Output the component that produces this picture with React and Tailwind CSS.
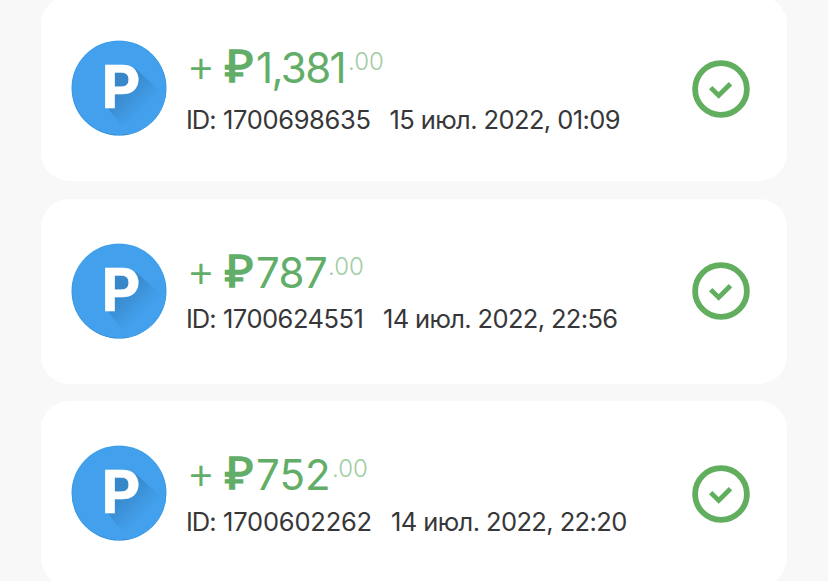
import React from 'react';

const payments = [
  {
    id: '1700698635',
    whole: '1,381',
    date: '15 июл. 2022, 01:09',
    amountClass: 'w-[92px] tracking-[-1.6px]',
    rowClass: 'pt-[48px]',
    metaClass: 'mt-[12px]',
    idClass: 'w-[166.5px] tracking-[-0.35px]',
    dateClass: 'tracking-[-0.6px]',
  },
  {
    id: '1700624551',
    whole: '787',
    date: '14 июл. 2022, 22:56',
    amountClass: 'w-[72px] tracking-[-0.6px]',
    rowClass: 'pt-[50px]',
    metaClass: 'mt-[6.5px]',
    idClass: 'w-[160px] tracking-[-0.5px]',
    dateClass: 'tracking-[-0.65px]',
  },
  {
    id: '1700602262',
    whole: '752',
    date: '14 июл. 2022, 22:20',
    amountClass: 'w-[76px] tracking-[0.1px]',
    rowClass: 'pt-[50px]',
    metaClass: 'mt-[6.5px]',
    idClass: 'w-[168px] tracking-[-0.2px]',
    dateClass: 'tracking-[-0.6px]',
  },
];

function PayeerLogo() {
  return (
    <svg viewBox="0 0 96 96" className="-mt-px w-24 h-24 shrink-0">
      <defs>
        <clipPath id="disc">
          <circle cx="48" cy="48" r="47.5" />
        </clipPath>
        <linearGradient id="shade" x1="50" y1="46" x2="73" y2="69" gradientUnits="userSpaceOnUse">
          <stop offset="0" stopColor="#3787c9" />
          <stop offset="1" stopColor="#43a0ec" />
        </linearGradient>
      </defs>
      <circle cx="48" cy="48" r="47.5" fill="#55b4f3" />
      <g clipPath="url(#disc)">
        <circle cx="48" cy="48.4" r="47.3" fill="#3788cb" />
        <circle cx="48" cy="48" r="46.9" fill="#43a0ec" />
        <path d="M65 29 L98 59 L98 98 L60 98 L36 67 L44 56 L44 32 L60 32 Z" fill="url(#shade)" />
      </g>
      <text
        transform="translate(30.6 67.8) scale(1.02 1)"
        fill="#fff"
        stroke="#fff"
        strokeWidth="0.6"
        fontFamily="Inter, sans-serif"
        fontWeight="700"
        fontSize="59"
      >
        P
      </text>
    </svg>
  );
}

function StatusIcon() {
  return (
    <svg viewBox="0 0 58 58" fill="none" stroke="#62ae5f" className="w-[58px] h-[58px] shrink-0">
      <circle cx="29" cy="29" r="25.9" strokeWidth="5.8" />
      <path d="M18.7 27.6 L26.7 35.4 L38.5 23.8" strokeWidth="4.8" />
    </svg>
  );
}

function PaymentCard({ payment }) {
  return (
    <li className="flex h-[185px] shrink-0 rounded-[28px] bg-white pl-[30px] pr-[37px]">
      <div className="flex items-center">
        <PayeerLogo />
      </div>
      <div className={`flex flex-1 flex-col pl-[19px] ${payment.rowClass}`}>
        <div className="flex h-12 items-start whitespace-nowrap leading-[48px] text-[#62ae68]">
          <span className="w-[39px] pl-[3px] font-['Lato',sans-serif] text-[41px]">+</span>
          <span className="-mt-[3px] w-[31px] origin-left scale-x-110 font-['Lato',sans-serif] text-[45px] font-bold">
            ₽
          </span>
          <span className={`text-[42px] font-normal ${payment.amountClass}`}>{payment.whole}</span>
          <span className="text-[24px] font-light leading-[35px] text-[#9fcda2]">.00</span>
        </div>
        <div
          className={`flex h-8 whitespace-nowrap text-[25.5px] leading-8 text-[#373739] ${payment.metaClass}`}
        >
          <span className="w-[37px] tracking-[-1px]">ID:</span>
          <span className={payment.idClass}>{payment.id}</span>
          <span className={payment.dateClass}>{payment.date}</span>
        </div>
      </div>
      <div className="flex items-center">
        <StatusIcon />
      </div>
    </li>
  );
}

export default function App() {
  return (
    <div className="h-[581px] w-full overflow-hidden bg-[#f8f8f8] font-['Inter','Open_Sans',sans-serif]">
      <ul className="-mt-1 ml-[41px] flex w-[746px] flex-col gap-[17.5px]">
        {payments.map((payment) => (
          <PaymentCard key={payment.id} payment={payment} />
        ))}
      </ul>
    </div>
  );
}
